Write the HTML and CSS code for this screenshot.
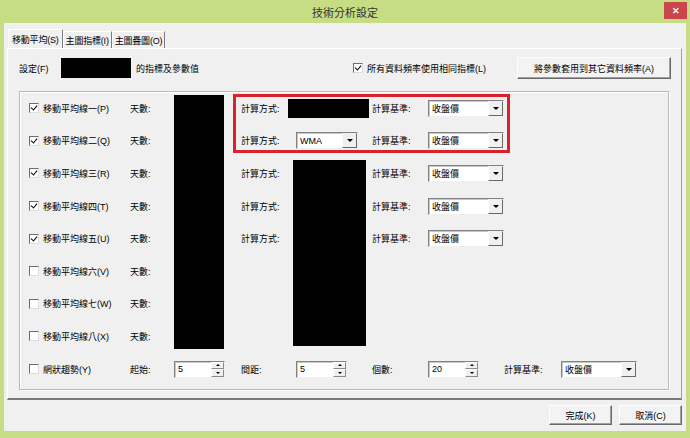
FILE: index.html
```html
<!DOCTYPE html>
<html lang="zh-Hant">
<head>
  <meta charset="UTF-8">
  <title>技術分析設定</title>
  <link rel="stylesheet" href="styles.css">
</head>
<body>

  <div class="window">
    <div class="titlebar">
      <span class="title">技術分析設定</span>
      <span class="close">&#x2715;</span>
    </div>

    <div class="body">
      <!-- Tabs -->
      <div class="tabs">
        <div class="tab active">移動平均(S)</div>
        <div class="tab">主圖指標(I)</div>
        <div class="tab">主圖疊圖(O)</div>
      </div>

      <div class="page">
        <div class="setting-row">
          <span class="setting-label">設定(F)</span>
          <div class="mask mask-setting"></div>
          <span class="setting-text">的指標及參數值</span>
          <label class="cb same-all"><span class="box checked"></span>所有資料頻率使用相同指標(L)</label>
          <button class="btn btn-apply">將參數套用到其它資料頻率(A)</button>
        </div>

        <div class="group">
          <!-- moving average lines -->
          <label class="cb r1 c1"><span class="box checked"></span>移動平均線一(P)</label>
          <span class="r1 c2">天數:</span>
          <span class="r1 c4 calc">計算方式:</span>
          <div class="mask mask-m1 r1 c5"></div>
          <span class="r1 c6">計算基準:</span>
          <div class="select r1 c7"><span class="val">收盤價</span><span class="drop"></span></div>

          <label class="cb r2 c1"><span class="box checked"></span>移動平均線二(Q)</label>
          <span class="r2 c2">天數:</span>
          <span class="r2 c4 calc">計算方式:</span>
          <div class="select select-wma r2 c5"><span class="val">WMA</span><span class="drop"></span></div>
          <span class="r2 c6">計算基準:</span>
          <div class="select r2 c7"><span class="val">收盤價</span><span class="drop"></span></div>

          <label class="cb r3 c1"><span class="box checked"></span>移動平均線三(R)</label>
          <span class="r3 c2">天數:</span>
          <span class="r3 c4 calc">計算方式:</span>
          <span class="r3 c6">計算基準:</span>
          <div class="select r3 c7"><span class="val">收盤價</span><span class="drop"></span></div>

          <label class="cb r4 c1"><span class="box checked"></span>移動平均線四(T)</label>
          <span class="r4 c2">天數:</span>
          <span class="r4 c4 calc">計算方式:</span>
          <span class="r4 c6">計算基準:</span>
          <div class="select r4 c7"><span class="val">收盤價</span><span class="drop"></span></div>

          <label class="cb r5 c1"><span class="box checked"></span>移動平均線五(U)</label>
          <span class="r5 c2">天數:</span>
          <span class="r5 c4 calc">計算方式:</span>
          <span class="r5 c6">計算基準:</span>
          <div class="select r5 c7"><span class="val">收盤價</span><span class="drop"></span></div>

          <label class="cb r6 c1"><span class="box"></span>移動平均線六(V)</label>
          <span class="r6 c2">天數:</span>

          <label class="cb r7 c1"><span class="box"></span>移動平均線七(W)</label>
          <span class="r7 c2">天數:</span>

          <label class="cb r8 c1"><span class="box"></span>移動平均線八(X)</label>
          <span class="r8 c2">天數:</span>

          <div class="mask mask-days"></div>
          <div class="mask mask-methods"></div>
          <div class="highlight"></div>

          <!-- net trend -->
          <label class="cb r9 c1"><span class="box"></span>網狀趨勢(Y)</label>
          <span class="r9 c2">起始:</span>
          <div class="spin r9 c3"><span class="val">5</span><span class="arrows"><span class="up"></span><span class="down"></span></span></div>
          <span class="r9 c4 calc">間距:</span>
          <div class="spin spin-gap r9 c5"><span class="val">5</span><span class="arrows"><span class="up"></span><span class="down"></span></span></div>
          <span class="r9 c6">個數:</span>
          <div class="spin r9 c7"><span class="val">20</span><span class="arrows"><span class="up"></span><span class="down"></span></span></div>
          <span class="r9 c8">計算基準:</span>
          <div class="select r9 c9"><span class="val">收盤價</span><span class="drop"></span></div>
        </div>
      </div>

      <div class="actions">
        <button class="btn">完成(K)</button>
        <button class="btn">取消(C)</button>
      </div>
    </div>
  </div>

</body>
</html>
```

FILE: styles.css
```css
* {
  box-sizing: border-box;
}

body {
  margin: 0;
  font-family: "Liberation Sans", "Noto Sans CJK TC", sans-serif;
  font-size: 9px;
  color: #000;
}

.window {
  width: 690px;
  height: 438px;
  background: #c6dd84;
  padding: 0 4px 7px 4px;
  display: flex;
  flex-direction: column;
}

/* title bar */
.titlebar {
  height: 23px;
  display: grid;
  grid-template-columns: 1fr auto 1fr;
  align-items: center;
}

.title {
  grid-column: 2;
  font-size: 11px;
  color: #333;
}

.close {
  grid-column: 3;
  justify-self: end;
  align-self: start;
  margin-top: 2px;
  margin-right: -1px;
  width: 23px;
  height: 17px;
  background: #c9464c;
  color: #fff;
  font-size: 9px;
  font-weight: bold;
  display: flex;
  align-items: center;
  justify-content: center;
}

.body {
  flex: 1;
  background: #f0f0f0;
  padding: 6px 4px 0 3px;
  display: flex;
  flex-direction: column;
}

/* tabs */
.tabs {
  height: 19px;
  display: flex;
  padding-left: 1px;
}

.tab {
  padding: 0 2px;
  margin-top: 2px;
  display: flex;
  align-items: center;
  border-left: 1px solid #fff;
  border-top: 1px solid #fff;
  border-right: 1px solid #7d7d7d;
  letter-spacing: -0.2px;
}

.tab.active {
  margin-top: 0;
  padding: 0 3px;
}

.page {
  height: 352px;
  padding: 9px 12px 0 11px;
  border-top: 1px solid #fff;
  border-left: 1px solid #fff;
  border-right: 1px solid #a0a0a0;
  border-bottom: 2px solid #7a7a7a;
}

.setting-row {
  height: 22px;
  margin-top: -1px;
  display: flex;
  align-items: center;
}

.setting-label {
  width: 42px;
}

.mask {
  background: #000;
}

.mask-setting {
  width: 70px;
  height: 20px;
}

.setting-text {
  margin-left: 5px;
}

.same-all {
  margin-left: auto;
}

.btn-apply {
  margin-left: 31px;
  margin-right: -2px;
  width: 154px;
  height: 22px;
}

/* checkbox */
.cb {
  display: flex;
  align-items: center;
  gap: 4px;
}

.box {
  width: 10px;
  height: 10px;
  background: #fff;
  border: 1px solid;
  border-color: #6d6d6d #dedede #dedede #6d6d6d;
  position: relative;
}

.box.checked::after {
  content: "";
  position: absolute;
  left: 2px;
  top: 0px;
  width: 3px;
  height: 5px;
  border: solid #000;
  border-width: 0 1.5px 1.5px 0;
  transform: rotate(40deg);
}

/* buttons */
.btn {
  font-family: inherit;
  font-size: 9px;
  color: #000;
  background: #f3f3f3;
  border: 1px solid;
  border-color: #fff #696969 #696969 #fff;
  box-shadow: inset -1px -1px 0 #a0a0a0;
  padding: 0;
}

/* group box */
.group {
  margin-top: 12px;
  height: 299px;
  border: 1px solid #b9b9b9;
  box-shadow: 1px 1px 0 #fff, inset 1px 1px 0 #fff;
  padding-left: 9px;
  display: grid;
  grid-template-columns: 101px 44px 51px 63px 84px 56px 76px 57px 76px;
  grid-template-rows: repeat(9, 32.6px);
  align-items: center;
}

.r1 { grid-row: 1; }
.r2 { grid-row: 2; }
.r3 { grid-row: 3; }
.r4 { grid-row: 4; }
.r5 { grid-row: 5; }
.r6 { grid-row: 6; }
.r7 { grid-row: 7; }
.r8 { grid-row: 8; }
.r9 { grid-row: 9; }

.c1 { grid-column: 1; }
.c2 { grid-column: 2; }
.c3 { grid-column: 3; }
.c4 { grid-column: 4; }
.c5 { grid-column: 5; }
.c6 { grid-column: 6; }
.c7 { grid-column: 7; }
.c8 { grid-column: 8; }
.c9 { grid-column: 9; }

.calc {
  padding-left: 16px;
}

.mask-days {
  grid-row: 1 / 9;
  grid-column: 3;
  align-self: stretch;
  margin: 3px 1px 4px 0;
}

.mask-m1 {
  width: 81px;
  height: 19px;
}

.mask-methods {
  grid-row: 3 / 9;
  grid-column: 5;
  align-self: stretch;
  justify-self: start;
  width: 73px;
  margin: 3px 0 7px 5px;
}

.highlight {
  grid-row: 1 / 3;
  grid-column: 4 / 8;
  align-self: stretch;
  margin: 2px -6px 4px 8px;
  border: 3px solid #d9222c;
}

/* dropdown */
.select,
.spin {
  height: 17px;
  background: #fff;
  border: 1px solid;
  border-color: #828282 #f0f0f0 #f0f0f0 #828282;
  box-shadow: inset 1px 1px 0 #c8c8c8;
  display: flex;
  justify-self: start;
}

.select {
  width: 76px;
}

.select-wma {
  width: 62px;
  margin-left: 8px;
}

.val {
  flex: 1;
  padding-left: 3px;
  display: flex;
  align-items: center;
}

.drop {
  width: 15px;
  background: #f0f0f0;
  border: 1px solid;
  border-color: #f0f0f0 #696969 #696969 #fff;
  display: flex;
  align-items: center;
  justify-content: center;
}

.drop::after,
.down::after {
  content: "";
  border-left: 3px solid transparent;
  border-right: 3px solid transparent;
  border-top: 3px solid #000;
}

/* spin box */
.spin {
  width: 51px;
}

.spin-gap {
  margin-left: 8px;
}

.arrows {
  width: 13px;
  display: flex;
  flex-direction: column;
}

.up,
.down {
  flex: 1;
  background: #f0f0f0;
  border: 1px solid;
  border-color: #fff #8a8a8a #8a8a8a #fff;
  display: flex;
  align-items: center;
  justify-content: center;
}

.up::after {
  content: "";
  border-left: 2px solid transparent;
  border-right: 2px solid transparent;
  border-bottom: 2px solid #000;
}

.down::after {
  border-left-width: 2px;
  border-right-width: 2px;
  border-top-width: 2px;
}

/* bottom buttons */
.actions {
  display: flex;
  justify-content: flex-end;
  gap: 7px;
  padding-top: 5px;
}

.actions .btn {
  width: 63px;
  height: 20px;
}
```
